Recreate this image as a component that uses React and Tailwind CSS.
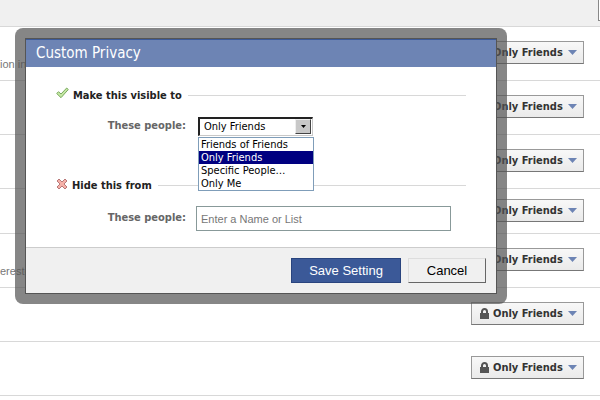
import React from "react";

const rows = [
  { note: "ion in", height: "h-[54px] pt-[14px]" },
  { note: "", height: "h-[54px] pt-[14px]" },
  { note: "", height: "h-[54px] pt-[14px]" },
  { note: "", height: "h-[45px] pt-[10px]" },
  { note: "ereste", height: "h-[54px] pt-[14px]" },
  { note: "", height: "h-[54px] pt-[14px]" },
  { note: "", height: "h-[54px] pt-[14px]" },
];

const options = ["Friends of Friends", "Only Friends", "Specific People…", "Only Me"];

function Lock() {
  return (
    <svg width="9" height="11" viewBox="0 0 9 11" aria-hidden="true">
      <path d="M2 5.500V3.500a2.500 2.500 0 0 1 5 0v2" fill="none" stroke="#555" strokeWidth="2" />
      <rect x="0" y="5" width="9" height="6" fill="#555" />
    </svg>
  );
}

function PrivacyButton() {
  return (
    <button
      type="button"
      className="flex h-[23px] w-[113px] items-center border border-[#999] border-b-[#777] bg-linear-to-b from-[#f8f8f8] to-[#eaeaea] pl-2 text-[11px] font-bold whitespace-nowrap text-[#333]"
    >
      <Lock />
      <span className="mt-0.5 ml-1">Only Friends</span>
      <svg className="ml-[5px]" width="9" height="5" viewBox="0 0 9 5" aria-hidden="true">
        <path d="M0 0h9L4.500 5z" fill="#6d84b4" />
      </svg>
    </button>
  );
}

function SettingsPage() {
  return (
    <main>
      <header className="flex h-[27px] justify-end overflow-hidden border-b border-[#d8d8d8] bg-[#f0f0f0]">
        <div className="h-[21px] w-0.5 border-b border-l border-[#888] bg-white" />
      </header>
      {rows.map((row, i) => (
        <div key={i} className={`flex items-start justify-between border-b border-[#d8d8d8] pr-4 ${row.height}`}>
          <span className="pt-[15px] font-['Liberation_Sans',Arial,sans-serif] text-[11px] leading-4 text-[#777]">
            {row.note}
          </span>
          <PrivacyButton />
        </div>
      ))}
    </main>
  );
}

function SectionTitle({ icon, children }) {
  return (
    <h3 className="flex h-4 items-center text-[11px] font-bold text-[#222]">
      {icon}
      <span className="mt-0.5 ml-1 whitespace-nowrap">{children}</span>
      <span className="ml-[6px] h-px flex-1 bg-[#d8d8d8]" />
    </h3>
  );
}

function Check() {
  return (
    <svg className="mb-1" width="13" height="12" viewBox="0 0 13 12" aria-hidden="true">
      <path d="M.7 6.500L2.500 4.700L5 7L10.700 1L12.300 2.500L5 10.700z" fill="#c5e8a4" stroke="#79a95e" />
    </svg>
  );
}

function Cross() {
  return (
    <svg className="mb-0.5" width="12" height="12" viewBox="0 0 12 12" aria-hidden="true">
      <path
        d="M1 3L3 1L6 4L9 1L11 3L8 6L11 9L9 11L6 8L3 11L1 9L4 6z"
        fill="#f5b0a8"
        stroke="#b87878"
      />
    </svg>
  );
}

function FieldLabel({ htmlFor, children }) {
  return (
    <label htmlFor={htmlFor} className="w-[130px] text-right text-[11px] font-bold text-[#666]">
      {children}
    </label>
  );
}

function AudienceSelect() {
  return (
    <div className="relative ml-3 w-[115px]">
      <select
        id="visible-to"
        defaultValue="Only Friends"
        className="block h-[19px] w-full appearance-none rounded-none border border-t-2 border-l-2 border-[#c8c8c8] border-t-[#222] border-l-[#222] bg-white pl-1 text-[11px] text-black"
      >
        {options.map((o) => (
          <option key={o}>{o}</option>
        ))}
      </select>
      <span className="pointer-events-none absolute top-[2px] right-[2px] flex h-[15px] w-4 items-center justify-center border border-[#eee] border-r-[#444] border-b-[#444] bg-[#c8c8c8]">
        <svg width="5" height="3" viewBox="0 0 5 3" aria-hidden="true">
          <path d="M0 0h5L2.500 3z" fill="#000" />
        </svg>
      </span>
      <ul className="absolute top-full left-0 mt-px w-[116px] border border-[#7f9db9] bg-white text-[11px] leading-[13px] text-black">
        {options.map((o) => (
          <li key={o} className={o === "Only Friends" ? "bg-[#000080] pl-0.5 text-white" : "pl-0.5"}>
            {o}
          </li>
        ))}
      </ul>
    </div>
  );
}

function PrivacyDialog() {
  return (
    <div className="absolute top-7 left-[15px] w-[492px] rounded-lg bg-[#525252]/70 p-[10px]">
      <section role="dialog" aria-labelledby="dialog-title" className="border border-[#555] bg-white">
        <h2
          id="dialog-title"
          className="flex h-7 items-center border-t border-[#3b5998] bg-[#6d84b4] pl-[10px] text-[15px] text-white"
        >
          Custom Privacy
        </h2>
        <div className="flex flex-col gap-[41px] border-b border-[#ccc] px-[30px] pt-5 pb-4">
          <div>
            <SectionTitle icon={<Check />}>Make this visible to</SectionTitle>
            <div className="mt-[14px] flex items-center">
              <FieldLabel htmlFor="visible-to">These people:</FieldLabel>
              <AudienceSelect />
            </div>
          </div>
          <div>
            <SectionTitle icon={<Cross />}>Hide this from</SectionTitle>
            <div className="mt-[13px] flex items-center">
              <FieldLabel htmlFor="hide-from">These people:</FieldLabel>
              <input
                id="hide-from"
                type="text"
                placeholder="Enter a Name or List"
                className="ml-[10px] h-[25px] w-[255px] border border-[#899] bg-white px-1 font-['Liberation_Sans',Arial,sans-serif] text-[11px] text-[#333] placeholder:text-[#777]"
              />
            </div>
          </div>
        </div>
        <footer className="flex h-[45px] items-start justify-end gap-[7px] bg-[#f0f0f0] pt-[10px] pr-[10px] font-['Liberation_Sans',Arial,sans-serif] text-[13px]">
          <button type="button" className="h-[25px] w-[110px] border border-[#29447e] bg-[#3b5998] text-white">
            Save Setting
          </button>
          <button
            type="button"
            className="h-[25px] w-[78px] border border-[#ddd] border-r-[#666] border-b-[#666] bg-[#f0f0f0] text-black"
          >
            Cancel
          </button>
        </footer>
      </section>
    </div>
  );
}

export default function App() {
  return (
    <div className="relative min-h-screen overflow-hidden bg-white font-['DejaVu_Sans_Condensed','DejaVu_Sans',Tahoma,sans-serif]">
      <SettingsPage />
      <PrivacyDialog />
    </div>
  );
}
